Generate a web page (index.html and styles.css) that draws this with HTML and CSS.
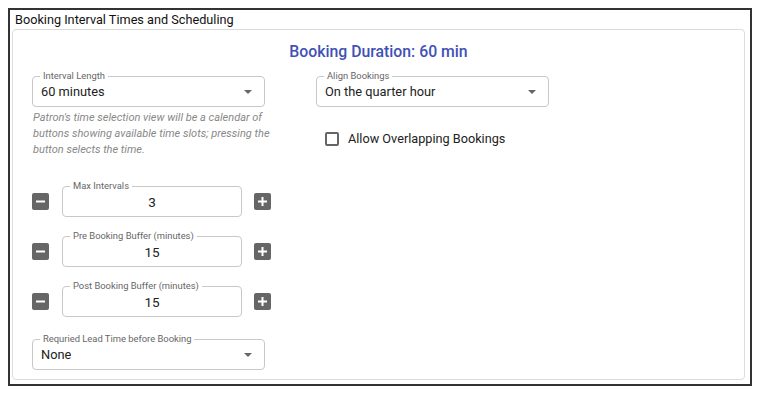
FILE: index.html
```html
<!DOCTYPE html>
<html lang="en">
<head>
  <meta charset="UTF-8">
  <meta name="viewport" content="width=device-width, initial-scale=1.0">
  <title>Booking Interval Times and Scheduling</title>
  <link rel="stylesheet" href="styles.css">
</head>
<body>
  <div class="panel">
    <div class="panel-title">Booking Interval Times and Scheduling</div>

    <div class="card">
      <h2 class="duration">Booking Duration: 60 min</h2>

      <div class="columns">
        <div class="col">
          <div class="field select">
            <span class="field-label">Interval Length</span>
            <span class="value">60 minutes</span>
            <span class="arrow"></span>
          </div>
          <p class="hint">Patron's time selection view will be a calendar of buttons showing available time slots; pressing the button selects the time.</p>

          <div class="stepper">
            <button class="step-btn" aria-label="decrease">
              <svg width="11" height="11" viewBox="0 0 11 11"><rect x="1" y="4.5" width="9" height="2" fill="#fff"/></svg>
            </button>
            <div class="field number">
              <span class="field-label">Max Intervals</span>
              <span class="value">3</span>
            </div>
            <button class="step-btn" aria-label="increase">
              <svg width="11" height="11" viewBox="0 0 11 11"><rect x="1" y="4.5" width="9" height="2" fill="#fff"/><rect x="4.5" y="1" width="2" height="9" fill="#fff"/></svg>
            </button>
          </div>

          <div class="stepper">
            <button class="step-btn" aria-label="decrease">
              <svg width="11" height="11" viewBox="0 0 11 11"><rect x="1" y="4.5" width="9" height="2" fill="#fff"/></svg>
            </button>
            <div class="field number">
              <span class="field-label">Pre Booking Buffer (minutes)</span>
              <span class="value">15</span>
            </div>
            <button class="step-btn" aria-label="increase">
              <svg width="11" height="11" viewBox="0 0 11 11"><rect x="1" y="4.5" width="9" height="2" fill="#fff"/><rect x="4.5" y="1" width="2" height="9" fill="#fff"/></svg>
            </button>
          </div>

          <div class="stepper">
            <button class="step-btn" aria-label="decrease">
              <svg width="11" height="11" viewBox="0 0 11 11"><rect x="1" y="4.5" width="9" height="2" fill="#fff"/></svg>
            </button>
            <div class="field number">
              <span class="field-label">Post Booking Buffer (minutes)</span>
              <span class="value">15</span>
            </div>
            <button class="step-btn" aria-label="increase">
              <svg width="11" height="11" viewBox="0 0 11 11"><rect x="1" y="4.5" width="9" height="2" fill="#fff"/><rect x="4.5" y="1" width="2" height="9" fill="#fff"/></svg>
            </button>
          </div>

          <div class="field select lead">
            <span class="field-label">Requried Lead Time before Booking</span>
            <span class="value">None</span>
            <span class="arrow"></span>
          </div>
        </div>

        <div class="col">
          <div class="field select">
            <span class="field-label">Align Bookings</span>
            <span class="value">On the quarter hour</span>
            <span class="arrow"></span>
          </div>
          <label class="check">
            <span class="box"></span>
            Allow Overlapping Bookings
          </label>
        </div>
      </div>
    </div>
  </div>
</body>
</html>
```

FILE: styles.css
```css
body {
  font-family: Roboto, 'Liberation Sans', sans-serif;
  background-color: #fff;
  margin: 8px;
  color: #222;
}
.panel {
  height: 374px;
  border: 2px solid #333;
  background-color: #fff;
  box-shadow: 1px 2px 8px 3px rgba(0,0,0,0.45);
  display: flex;
  flex-direction: column;
}
.panel-title {
  font-size: 12.7px;
  line-height: 19px;
  padding-left: 5px;
  color: #111;
}
.card {
  flex: 1;
  margin: 0 5px 4px 2px;
  border: 1px solid #dcdcdc;
  border-radius: 4px;
  padding: 10px 19px 0;
}
.duration {
  margin: 0;
  text-align: center;
  font-size: 15.8px;
  line-height: 24px;
  font-weight: 500;
  color: #3f51b5;
}
.columns {
  display: grid;
  grid-template-columns: 284px 1fr;
  margin-top: 12px;
}
.field {
  position: relative;
  height: 31px;
  box-sizing: border-box;
  border: 1px solid #c8c8c8;
  border-radius: 4px;
  display: flex;
  align-items: center;
}
.field-label {
  position: absolute;
  top: -7px;
  left: 7px;
  padding: 0 3px;
  background-color: #fff;
  font-size: 9.4px;
  line-height: 12px;
  color: #666;
}
.select {
  width: 233px;
  padding-left: 8px;
}
.value {
  font-size: 12.8px;
  color: #222;
}
.number .value {
  font-size: 13.5px;
}
.arrow {
  position: absolute;
  right: 12px;
  top: 13px;
  border-left: 4px solid transparent;
  border-right: 4px solid transparent;
  border-top: 4px solid #666;
}
.hint {
  margin: 3px 0 0 1px;
  font-size: 11px;
  line-height: 16px;
  font-style: italic;
  color: #888;
  width: 240px;
}
.stepper {
  display: flex;
  align-items: center;
  margin-top: 19px;
}
.hint + .stepper {
  margin-top: 28px;
}
.step-btn {
  width: 17px;
  height: 17px;
  padding: 0;
  border: none;
  border-radius: 2px;
  background-color: #666;
  display: flex;
  align-items: center;
  justify-content: center;
}
.number {
  width: 180px;
  margin: 0 12px 0 13px;
  justify-content: center;
}
.lead {
  margin-top: 22px;
}
.check {
  display: flex;
  align-items: center;
  gap: 9px;
  margin: 24px 0 0 9px;
  font-size: 12.7px;
  color: #222;
}
.box {
  width: 14px;
  height: 14px;
  box-sizing: border-box;
  border: 2px solid #666;
  border-radius: 2px;
}
```
